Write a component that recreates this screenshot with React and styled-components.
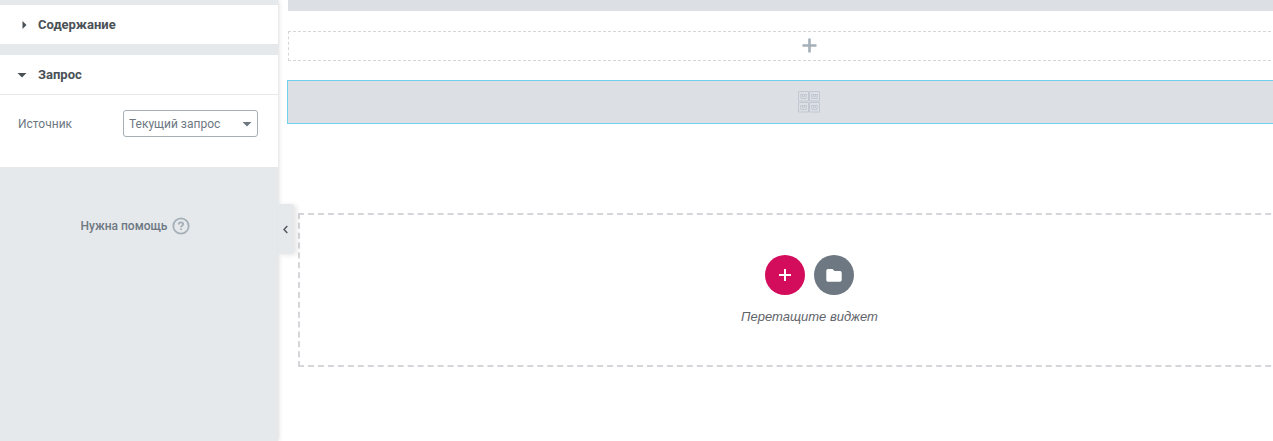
import React, { useState } from "react";
import styled, { createGlobalStyle } from "styled-components";

const GlobalStyle = createGlobalStyle`
  * {
    box-sizing: border-box;
  }

  body {
    margin: 0;
    background-color: #fff;
    font-family: Roboto, "Liberation Sans", sans-serif;
  }

  button {
    font-family: inherit;
    padding: 0;
    border: none;
    cursor: pointer;
  }
`;

const Editor = styled.div`
  display: flex;
  height: 100vh;
  overflow: hidden;
`;

const Panel = styled.aside`
  position: relative;
  flex: 0 0 278px;
  padding-top: 5px;
  background-color: #e6e9ec;
  box-shadow: 0 0 5px rgba(0, 0, 0, 0.2);
`;

const Section = styled.section`
  margin-bottom: 11px;
  background-color: #fff;
`;

const SectionHeader = styled.button`
  display: flex;
  align-items: center;
  gap: 8px;
  width: 100%;
  height: 39px;
  padding: 0 16px;
  background: none;
  color: #495157;
  font-size: 13px;
  font-weight: 700;
  line-height: 16px;
`;

const HeaderIcon = styled.svg`
  width: 14px;
  height: 14px;
  fill: #495157;
`;

const SectionBody = styled.div`
  display: flex;
  align-items: center;
  justify-content: space-between;
  padding: 15px 20px 30px 18px;
  border-top: 1px solid #e6e9ec;
`;

const Label = styled.label`
  color: #6d7882;
  font-size: 12px;
`;

const SelectWrapper = styled.div`
  display: grid;
  grid-template-columns: 1fr 16px;
  align-items: center;
  width: 135px;
`;

const Select = styled.select`
  grid-area: 1 / 1 / 2 / 3;
  height: 27px;
  padding: 0 16px 0 5px;
  appearance: none;
  border: 1px solid #a4afb7;
  border-radius: 3px;
  background-color: #fff;
  color: #6d7882;
  font-family: inherit;
  font-size: 12px;
`;

const SelectArrow = styled.svg`
  grid-area: 1 / 2;
  width: 10px;
  height: 6px;
  fill: #6d7882;
  pointer-events: none;
`;

const Help = styled.a`
  display: flex;
  align-items: center;
  justify-content: center;
  gap: 5px;
  margin: 50px 7px 0 0;
  color: #6d7882;
  font-size: 12px;
  font-weight: 500;
  text-decoration: none;
`;

const HelpIcon = styled.svg`
  width: 18px;
  height: 18px;
  fill: none;
  stroke: #a4afb7;
`;

const Collapse = styled.button`
  position: absolute;
  top: 204px;
  left: 100%;
  display: flex;
  align-items: center;
  justify-content: center;
  width: 16px;
  height: 50px;
  border-radius: 0 3px 3px 0;
  background-color: #e6e9ec;
  box-shadow: 3px 1px 5px rgba(0, 0, 0, 0.1);

  svg {
    width: 14px;
    height: 10px;
    fill: none;
    stroke: #495157;
  }
`;

/* the preview is wider than the room beside the panel and runs off the right side */
const Preview = styled.main`
  flex: 1;
  display: flex;
  flex-direction: column;
  margin: 0 -58px 0 10px;
`;

const PreviousWidget = styled.div`
  flex: 0 0 11px;
  margin-bottom: 20px;
  background-color: #dcdfe4;
`;

const EmptyColumn = styled.button`
  display: flex;
  align-items: center;
  justify-content: center;
  height: 30px;
  margin-bottom: 19px;
  padding-bottom: 2px;
  border: 1px dashed #d5d5da;
  background: none;

  svg {
    width: 15px;
    height: 15px;
    fill: #a4afb7;
  }
`;

const Widget = styled.div`
  display: flex;
  align-items: center;
  justify-content: center;
  height: 44px;
  margin: 0 -1px 89px;
  border: 1px solid #71d0ee;
  background-color: #dcdfe4;

  svg {
    width: 23px;
    height: 22px;
    fill: none;
    stroke: #c1c8d2;
  }
`;

const DropArea = styled.section`
  display: flex;
  flex-direction: column;
  align-items: center;
  margin: 0 10px;
  padding: 40px 0;
  border: 2px dashed #d5d5da;
`;

const Actions = styled.div`
  display: flex;
  gap: 9px;
`;

const RoundButton = styled.button`
  display: flex;
  align-items: center;
  justify-content: center;
  width: 40px;
  height: 40px;
  border-radius: 50%;
  background-color: ${({ $color }) => $color};

  svg {
    width: 16px;
    height: 16px;
    fill: #fff;
  }
`;

const DropText = styled.p`
  margin: 14px 0 0;
  color: #5f646a;
  font-family: "Liberation Sans", Arial, sans-serif;
  font-size: 13px;
  font-style: italic;
  line-height: 16px;
`;

const Caret = ({ open }) => (
  <HeaderIcon viewBox="0 0 14 14" aria-hidden="true">
    <path d={open ? "M1.5 5h9L6 9.5z" : "M6.5 3v8l4-4z"} />
  </HeaderIcon>
);

const tiles = [
  [0, 0],
  [11, 0],
  [0, 11],
  [11, 11],
];

const ProductsIcon = () => (
  <svg viewBox="0 0 23 22" aria-hidden="true">
    {tiles.map(([x, y]) => (
      <g key={`${x}-${y}`} transform={`translate(${x} ${y})`}>
        <path d="M.5.5h10v9.500H.5z" />
        <path d="M2.500 3.500h6L8 7.500H3z" />
        <path d="M4.500 4v1.500h2V4" />
      </g>
    ))}
  </svg>
);

const App = () => {
  const [contentOpen, setContentOpen] = useState(false);
  const [queryOpen, setQueryOpen] = useState(true);

  return (
    <>
      <GlobalStyle />
      <Editor>
        <Panel>
          <Section>
            <SectionHeader
              aria-expanded={contentOpen}
              onClick={() => setContentOpen(!contentOpen)}
            >
              <Caret open={contentOpen} />
              Содержание
            </SectionHeader>
          </Section>
          <Section>
            <SectionHeader
              aria-expanded={queryOpen}
              onClick={() => setQueryOpen(!queryOpen)}
            >
              <Caret open={queryOpen} />
              Запрос
            </SectionHeader>
            {queryOpen && (
              <SectionBody>
                <Label htmlFor="source">Источник</Label>
                <SelectWrapper>
                  <Select id="source">
                    <option>Текущий запрос</option>
                  </Select>
                  <SelectArrow viewBox="0 0 10 6" aria-hidden="true">
                    <path d="M.5 1h9L5 5.5z" />
                  </SelectArrow>
                </SelectWrapper>
              </SectionBody>
            )}
          </Section>
          <Help href="#help">
            Нужна помощь
            <HelpIcon viewBox="0 0 18 18" aria-hidden="true">
              <circle cx="9" cy="9" r="7.7" strokeWidth="1.8" />
              <path
                d="M6.8 7.4c0-1.3 1-2 2.2-2s2.2.7 2.2 1.8c0 1.4-2.2 1.5-2.2 3M9 11.4v1.6"
                strokeWidth="1.8"
              />
            </HelpIcon>
          </Help>
          <Collapse aria-label="Свернуть панель">
            <svg viewBox="0 0 14 10" aria-hidden="true">
              <path d="M8.3 2L5 5.5 8.300 9" strokeWidth="1.3" />
            </svg>
          </Collapse>
        </Panel>
        <Preview>
          <PreviousWidget />
          <EmptyColumn aria-label="Добавить виджет">
            <svg viewBox="0 0 15 15" aria-hidden="true">
              <path d="M6.2.5h2.6v5.7h5.7v2.6H8.8v5.7H6.2V8.8H.5V6.2h5.7z" />
            </svg>
          </EmptyColumn>
          <Widget>
            <ProductsIcon />
          </Widget>
          <DropArea>
            <Actions>
              <RoundButton $color="#d30c5c" aria-label="Добавить секцию">
                <svg viewBox="0 0 16 16" aria-hidden="true">
                  <path d="M7 2h2v5h5v2H9v5H7V9H2V7h5z" />
                </svg>
              </RoundButton>
              <RoundButton $color="#6d7882" aria-label="Добавить шаблон">
                <svg viewBox="0 0 16 16" aria-hidden="true">
                  <path d="M2 2h4.5L8.5 4H14q1.7 0 1.7 1.7V13q0 1.7-1.7 1.7H2Q.3 14.7.3 13V3.7Q.3 2 2 2z" />
                </svg>
              </RoundButton>
            </Actions>
            <DropText>Перетащите виджет</DropText>
          </DropArea>
        </Preview>
      </Editor>
    </>
  );
};

export default App;
